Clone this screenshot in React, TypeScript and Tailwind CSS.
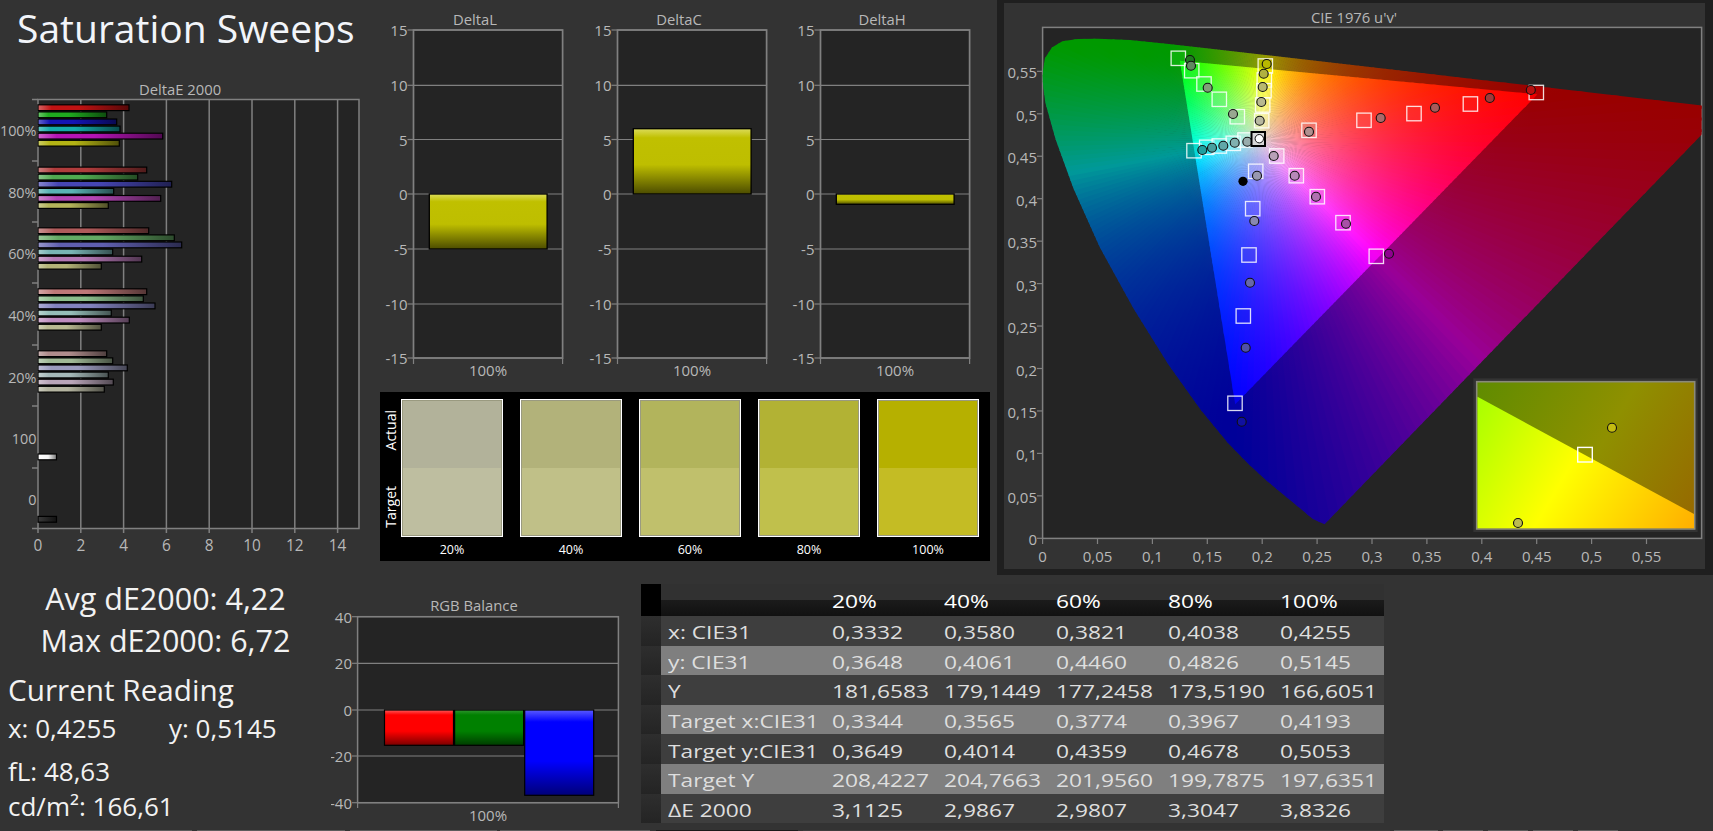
import React from "react";

type Bar = { end: number; c: string };

const AXIS = "#b8b8b8";
const GRID = "#808080";
const PLOT = "#242424";

// ---- colour helpers ----
const hex = (c: string) => [1, 3, 5].map((i) => parseInt(c.slice(i, i + 2), 16));
const mix = (c: string, to: number, t: number) =>
  `rgb(${hex(c)
    .map((v) => Math.round(v + (to - v) * t))
    .join(",")})`;

// ---- DeltaE 2000 ----
const groups: { label: string; top: number; ends: number[]; colors: string[] }[] = [
  { label: "100%", top: 107.7, ends: [129, 106.7, 116.7, 120, 162.7, 119.3], colors: ["#c01212", "#1faa1f", "#1414b4", "#14aaaa", "#b414b4", "#b4b414"] },
  { label: "80%", top: 170, ends: [146.7, 137.7, 171.7, 113.7, 160.7, 108.3], colors: ["#b03c3c", "#50aa50", "#4646b4", "#5ab4b4", "#b446b4", "#b4b45a"] },
  { label: "60%", top: 230.7, ends: [148.7, 174.3, 181.7, 112.7, 141.7, 101.3], colors: ["#af5a5a", "#64aa64", "#5f5faf", "#78b4b4", "#b478b4", "#b4b478"] },
  { label: "40%", top: 291.7, ends: [146.7, 143.3, 155, 111.3, 129.3, 101.3], colors: ["#be7878", "#8cbe8c", "#8282be", "#96beb9", "#be8cbe", "#b9b991"] },
  { label: "20%", top: 353.7, ends: [106.7, 112.7, 127.3, 108.3, 113.3, 104.3], colors: ["#af8c8c", "#a0b996", "#9b9bbe", "#a5b9b9", "#b9a5b9", "#b4b4a0"] },
];

const deltaEBars: (Bar & { y: number; id: string })[] = [];
groups.forEach((g, gi) =>
  g.ends.forEach((end, i) =>
    deltaEBars.push({ end, c: g.colors[i], y: g.top + i * 7.1, id: `de-${gi}-${i}` })
  )
);

const DeltaEChart = () => {
  const yTicks = [99.5, 161, 222, 283, 345, 406, 468, 528.5];
  const xVal = (v: number) => 38 + v * 21.4;
  return (
    <svg width={380} height={490} viewBox="0 70 380 490" className="block">
      <defs>
        {deltaEBars.map((b) => (
          <linearGradient key={b.id} id={b.id}>
            <stop offset="0" stopColor={mix(b.c, 255, 0.35)} />
            <stop offset="0.15" stopColor={b.c} />
            <stop offset="0.45" stopColor={b.c} />
            <stop offset="1" stopColor={mix(b.c, 0, 0.55)} />
          </linearGradient>
        ))}
        <linearGradient id="de-white">
          <stop offset="0" stopColor="#ffffff" />
          <stop offset="0.55" stopColor="#f4f4f4" />
          <stop offset="1" stopColor="#777777" />
        </linearGradient>
        <linearGradient id="de-black">
          <stop offset="0" stopColor="#3a3a3a" />
          <stop offset="1" stopColor="#111111" />
        </linearGradient>
      </defs>
      <text x={180} y={88.5} textAnchor="middle" dominantBaseline="central" fontSize={14.8} fill={AXIS}>
        DeltaE 2000
      </text>
      <rect x={38} y={99.5} width={321} height={429} fill={PLOT} stroke={GRID} strokeWidth={1.5} />
      {[2, 4, 6, 8, 10, 12, 14].map((v) => (
        <line key={v} x1={xVal(v)} x2={xVal(v)} y1={99.5} y2={528.5} stroke={GRID} strokeWidth={1.5} />
      ))}
      {yTicks.map((y) => (
        <line key={y} x1={32} x2={38} y1={y} y2={y} stroke={GRID} strokeWidth={1.5} />
      ))}
      {[0, 2, 4, 6, 8, 10, 12, 14].map((v) => (
        <g key={v}>
          <line x1={xVal(v)} x2={xVal(v)} y1={528.5} y2={533} stroke={GRID} strokeWidth={1.5} />
          <text x={xVal(v)} y={545.5} textAnchor="middle" dominantBaseline="central" fontSize={15.4} fill={AXIS}>
            {v}
          </text>
        </g>
      ))}
      {[
        ["100%", 130.5],
        ["80%", 192],
        ["60%", 253],
        ["40%", 315],
        ["20%", 377],
        ["100", 438],
        ["0", 499],
      ].map(([t, y]) => (
        <text key={t} x={36.5} y={y} textAnchor="end" dominantBaseline="central" fontSize={14.4} fill={AXIS}>
          {t}
        </text>
      ))}
      {deltaEBars.map((b) => (
        <rect key={b.id} x={38} y={b.y - 2.9} width={b.end - 38} height={5.8} fill={`url(#${b.id})`} stroke="#000" strokeWidth={1.2} />
      ))}
      <rect x={38} y={454} width={18.5} height={5.8} fill="url(#de-white)" stroke="#000" strokeWidth={1.2} />
      <rect x={38} y={516.4} width={18.5} height={5.8} fill="url(#de-black)" stroke="#000" strokeWidth={1.2} />
    </svg>
  );
};

// ---- DeltaL / C / H ----
const DeltaChart = ({ title, id, y0, y1 }: { title: string; id: string; y0: number; y1: number }) => {
  const left = 33.5;
  const right = 182.6;
  const ticks: [number, number][] = [
    [15, 30],
    [10, 85.3],
    [5, 139.5],
    [0, 194],
    [-5, 249],
    [-10, 304],
    [-15, 358],
  ];
  return (
    <svg width={203.5} height={380} viewBox="0 0 203.5 380" className="block">
      <defs>
        <linearGradient id={id} x1="0" y1="0" x2="0" y2="1">
          <stop offset="0" stopColor="#dcdc5a" />
          <stop offset="0.14" stopColor="#c0c000" />
          <stop offset="0.55" stopColor="#bebe00" />
          <stop offset="1" stopColor="#4c4c00" />
        </linearGradient>
      </defs>
      <text x={95} y={19} textAnchor="middle" dominantBaseline="central" fontSize={14.8} fill={AXIS}>
        {title}
      </text>
      <rect x={left} y={30} width={right - left} height={328} fill={PLOT} stroke={GRID} strokeWidth={1.7} />
      {ticks.map(([v, y]) => (
        <g key={v}>
          <line x1={left} x2={right} y1={y} y2={y} stroke={GRID} strokeWidth={1.2} />
          <line x1={left - 6} x2={left} y1={y} y2={y} stroke={GRID} strokeWidth={1.2} />
          <text x={left - 6} y={y} textAnchor="end" dominantBaseline="central" fontSize={15} fill={AXIS}>
            {v}
          </text>
        </g>
      ))}
      <line x1={left} x2={left} y1={358} y2={364} stroke={GRID} strokeWidth={1.2} />
      <line x1={right} x2={right} y1={358} y2={364} stroke={GRID} strokeWidth={1.2} />
      <rect x={49.3} y={y0} width={117.8} height={y1 - y0} fill={`url(#${id})`} stroke="#000" strokeWidth={1.3} />
      <text x={108} y={370} textAnchor="middle" dominantBaseline="central" fontSize={15} fill={AXIS}>
        100%
      </text>
    </svg>
  );
};

// ---- swatches ----
const swatches = [
  { label: "20%", actual: "#b2b29a", target: "#bebea0" },
  { label: "40%", actual: "#b2b27a", target: "#c0c088" },
  { label: "60%", actual: "#b2b45c", target: "#c0c06c" },
  { label: "80%", actual: "#b2b234", target: "#c0c04c" },
  { label: "100%", actual: "#b6b000", target: "#c4bc24" },
];

// ---- CIE 1976 ----
const px = (u: number) => 1042.6 + 1098 * u;
const py = (v: number) => 538.3 - 849 * v;

const locus: [number, number][] = [
  [0.2568, 0.0166], [0.2461, 0.0226], [0.2347, 0.035], [0.2161, 0.0549], [0.2033, 0.0688], [0.1877, 0.0871],
  [0.169, 0.1119], [0.1441, 0.151], [0.1147, 0.2044], [0.0828, 0.2708], [0.0521, 0.3427], [0.0282, 0.4117],
  [0.0119, 0.4698], [0.0025, 0.5131], [-0.0005, 0.5431], [0.002, 0.565], [0.0085, 0.578], [0.018, 0.5855],
  [0.032, 0.5882], [0.0501, 0.5885], [0.0792, 0.5868], [0.1127, 0.5825], [0.1531, 0.5766], [0.2026, 0.5694], [0.2623, 0.5604],
  [0.3315, 0.5501], [0.4035, 0.5393], [0.5203, 0.5219], [0.6005, 0.5099], [0.6234, 0.5065],
];
const locusPts = locus.map(([u, v]) => `${px(u)},${py(v)}`).join(" ");
const gamutPts = [
  [0.4507, 0.5229],
  [0.125, 0.5625],
  [0.1754, 0.1579],
]
  .map(([u, v]) => `${px(u)},${py(v)}`)
  .join(" ");

// colour of a chromaticity point, plain linear rec709 scaled to its largest channel
const colorAt = (sx: number, sy: number, k: number) => {
  const u = (sx - 1042.6) / 1098;
  const v = Math.max((538.3 - sy) / 849, 0.01);
  const den = 6 * u - 16 * v + 12;
  const x = (9 * u) / den;
  const y = (4 * v) / den;
  const X = x / y;
  const Z = (1 - x - y) / y;
  const rgb = [
    3.2406 * X - 1.5372 - 0.4986 * Z,
    -0.9689 * X + 1.8758 + 0.0415 * Z,
    0.0557 * X - 0.204 + 1.057 * Z,
  ].map((c) => Math.max(c, 0));
  const m = Math.max(...rgb);
  return `rgb(${rgb.map((c) => Math.round((c / m) * 255 * k)).join(",")})`;
};

const WX = px(0.1978);
const WY = py(0.4683);
const WEDGES = 240;

const makeFan = (prefix: string, radius: number, k: number) =>
  Array.from({ length: WEDGES }, (_, i) => {
    const step = (Math.PI * 2) / WEDGES;
    const a0 = i * step;
    const a1 = a0 + step * 1.25;
    const mid = a0 + step / 2;
    const stops = Array.from({ length: 19 }, (_, j) => {
      const t = Math.pow(j / 18, 1.6);
      return {
        t,
        c: colorAt(WX + Math.cos(mid) * radius * t, WY + Math.sin(mid) * radius * t, k),
      };
    });
    return {
      id: `${prefix}${i}`,
      x2: WX + Math.cos(mid) * radius,
      y2: WY + Math.sin(mid) * radius,
      pts: `${WX},${WY} ${WX + Math.cos(a0) * radius * 1.05},${WY + Math.sin(a0) * radius * 1.05} ${WX + Math.cos(a1) * radius * 1.05},${WY + Math.sin(a1) * radius * 1.05}`,
      stops,
    };
  });

const outerFan = makeFan("o", 520, 0.6);
const innerFan = makeFan("i", 300, 1);

const Fan = ({ fan, clip }: { fan: ReturnType<typeof makeFan>; clip: string }) => (
  <g clipPath={`url(#${clip})`}>
    <defs>
      {fan.map((w) => (
        <linearGradient key={w.id} id={w.id} gradientUnits="userSpaceOnUse" x1={WX} y1={WY} x2={w.x2} y2={w.y2}>
          {w.stops.map((s, j) => (
            <stop key={j} offset={s.t} stopColor={s.c} />
          ))}
        </linearGradient>
      ))}
    </defs>
    {fan.map((w) => (
      <polygon key={w.id} points={w.pts} fill={`url(#${w.id})`} />
    ))}
  </g>
);

const squares: [number, number, string][] = [
  [1178.3, 58.3, "#1fd01f"], [1191.7, 70.7, "#30e840"], [1204, 84, "#48f060"], [1219.3, 99.3, "#70f088"], [1237.3, 116.7, "#a8f4b0"],
  [1194, 150.7, "#10a8a0"], [1206.7, 147.3, "#40e0f0"], [1219.3, 146, "#70e8f4"], [1233.3, 143.3, "#a0f0f8"], [1245, 140, "#d0f8fc"],
  [1265.3, 66, "#e8e800"], [1264.3, 80, "#f0f040"], [1264, 90.7, "#f4f470"], [1262.7, 105, "#f8f890"], [1261.7, 120.7, "#fcfcc0"],
  [1309, 130.3, "#d87878"], [1364, 120.3, "#ff5050"], [1414, 113.6, "#ff3838"], [1470.4, 104, "#ff2020"], [1536.3, 92.5, "#d80000"],
  [1276.7, 156, "#f8d0f8"], [1296.3, 175.7, "#f0a0f0"], [1317.3, 196.7, "#ec78ec"], [1343, 222.7, "#e040e0"], [1376.3, 256.3, "#e000e0"],
  [1255.7, 171.3, "#a8a8ff"], [1252.7, 208.7, "#6868ff"], [1249, 255, "#4848f0"], [1243.3, 316, "#2020f0"], [1235, 403.3, "#0808c0"],
];

const dots: [number, number, string][] = [
  [1190, 60, "#1f7a1f"], [1191, 65.7, "#608860"], [1207.7, 87.7, "#80a078"], [1233, 114, "#98a890"],
  [1202.3, 150, "#20a0a0"], [1212, 147.7, "#48a0a0"], [1223.3, 145.7, "#60a8a8"], [1234.7, 142.7, "#80b0b0"], [1247.3, 141.7, "#98acac"],
  [1266.7, 64, "#b8b800"], [1263.7, 73.7, "#b0b040"], [1262.7, 87, "#b8b870"], [1261.3, 102, "#b8b890"], [1259.7, 120.7, "#b8b8a0"],
  [1309, 131.7, "#b09090"], [1380.7, 118, "#aa6a6a"], [1435, 107.7, "#a85a5a"], [1489.8, 98, "#a03a3a"], [1530.8, 90, "#b81010"],
  [1273.7, 156, "#b8a0b8"], [1294.7, 175.7, "#b888b8"], [1316, 196.7, "#b070b0"], [1346, 223.7, "#a850a8"], [1389, 253.7, "#900090"],
  [1257, 175.7, "#9898b0"], [1254.3, 221, "#8888b0"], [1250, 282.7, "#6868a8"], [1245.7, 347.7, "#5050a8"], [1241.7, 421.7, "#1010a0"],
];

const xLabels = ["0", "0,05", "0,1", "0,15", "0,2", "0,25", "0,3", "0,35", "0,4", "0,45", "0,5", "0,55"];
const yLabels = ["0", "0,05", "0,1", "0,15", "0,2", "0,25", "0,3", "0,35", "0,4", "0,45", "0,5", "0,55"];

const CieChart = () => (
  <svg width={701} height={566} viewBox="1004 3 701 566" className="block">
    <defs>
      <clipPath id="locus">
        <polygon points={locusPts} />
      </clipPath>
      <clipPath id="gamut">
        <polygon points={gamutPts} />
      </clipPath>
      <clipPath id="plot">
        <rect x={1042.6} y={27.4} width={659} height={511} />
      </clipPath>
      <linearGradient id="inset-dark" gradientUnits="userSpaceOnUse" x1={1477} y1={382} x2={1695} y2={510}>
        <stop offset="0" stopColor="#5f8c00" />
        <stop offset="0.55" stopColor="#8f9000" />
        <stop offset="1" stopColor="#966a00" />
      </linearGradient>
      <linearGradient id="inset-lit" gradientUnits="userSpaceOnUse" x1={1477} y1={400} x2={1695} y2={529}>
        <stop offset="0" stopColor="#a8ff00" />
        <stop offset="0.45" stopColor="#ffff00" />
        <stop offset="1" stopColor="#ffae00" />
      </linearGradient>
    </defs>
    <text x={1354} y={16.6} textAnchor="middle" dominantBaseline="central" fontSize={14.8} fill={AXIS}>
      CIE 1976 u'v'
    </text>
    <rect x={1042.6} y={27.4} width={659} height={511} fill={PLOT} stroke={GRID} strokeWidth={1.5} />
    <g clipPath="url(#plot)">
      <Fan fan={outerFan} clip="locus" />
      <Fan fan={innerFan} clip="gamut" />
    </g>
    {xLabels.map((t, i) => (
      <g key={t}>
        <line x1={px(i * 0.05)} x2={px(i * 0.05)} y1={538.3} y2={544} stroke={GRID} strokeWidth={1.2} />
        <text x={px(i * 0.05)} y={556} textAnchor="middle" dominantBaseline="central" fontSize={15} fill={AXIS}>
          {t}
        </text>
      </g>
    ))}
    {yLabels.map((t, i) => (
      <g key={t}>
        <line x1={1037} x2={1042.6} y1={py(i * 0.05)} y2={py(i * 0.05)} stroke={GRID} strokeWidth={1.2} />
        <text x={1037} y={py(i * 0.05) + 1} textAnchor="end" dominantBaseline="central" fontSize={15} fill={AXIS}>
          {t}
        </text>
      </g>
    ))}
    {squares.map(([x, y, c]) => (
      <rect key={`${x}-${y}`} x={x - 7.2} y={y - 7.2} width={14.4} height={14.4} fill={c} fillOpacity={0.4} stroke="#fff" strokeOpacity={0.85} strokeWidth={1.3} />
    ))}
    {dots.map(([x, y, c]) => (
      <circle key={`${x}-${y}`} cx={x} cy={y} r={4.5} fill={c} stroke="#111" strokeWidth={1.1} />
    ))}
    <rect x={1251.5} y={132} width={13.5} height={14} fill="#d8d8d8" stroke="#000" strokeWidth={2} />
    <circle cx={1259.3} cy={138.7} r={4.2} fill="#fff" stroke="#111" strokeWidth={1} />
    <circle cx={1243} cy={181.3} r={4.6} fill="#000" />
    {/* zoomed inset around the current point */}
    <rect x={1473.3} y={378.3} width={224.4} height={153.7} fill="#333" />
    <rect x={1476.7} y={381.7} width={218} height={147.3} fill="url(#inset-dark)" stroke="#8a8a7a" strokeWidth={1.6} />
    <polygon points="1477.5,396.7 1694,514 1694,528.2 1477.5,528.2" fill="url(#inset-lit)" />
    <rect x={1577.7} y={447.4} width={14.6} height={14.6} fill="none" stroke="#fff" strokeWidth={1.4} />
    <circle cx={1612} cy={427.7} r={4.5} fill="#c4bc10" stroke="#111" strokeWidth={1.1} />
    <circle cx={1518} cy={523} r={4.5} fill="#bcbc50" stroke="#111" strokeWidth={1.1} />
  </svg>
);

// ---- RGB balance ----
const RgbChart = () => {
  const bars = [
    { x: 384.5, y1: 745.3, id: "rgb-r", top: "#ff5a5a", mid: "#ff0000", low: "#7a0000" },
    { x: 454.6, y1: 745.3, id: "rgb-g", top: "#2f962f", mid: "#008000", low: "#003c00" },
    { x: 524.7, y1: 795.3, id: "rgb-b", top: "#5a5aff", mid: "#0000ff", low: "#000078" },
  ];
  return (
    <svg width={300} height={255} viewBox="331 575 300 255" className="block">
      <defs>
        {bars.map((b) => (
          <linearGradient key={b.id} id={b.id} x1="0" y1="0" x2="0" y2="1">
            <stop offset="0" stopColor={b.top} />
            <stop offset="0.14" stopColor={b.mid} />
            <stop offset="0.6" stopColor={b.mid} />
            <stop offset="1" stopColor={b.low} />
          </linearGradient>
        ))}
      </defs>
      <text x={474} y={605} textAnchor="middle" dominantBaseline="central" fontSize={14.8} fill={AXIS}>
        RGB Balance
      </text>
      <rect x={357.6} y={616.7} width={260.8} height={186} fill={PLOT} stroke={GRID} strokeWidth={1.5} />
      {[
        [40, 616.7],
        [20, 663.3],
        [0, 710],
        [-20, 756],
        [-40, 802.7],
      ].map(([v, y]) => (
        <g key={v}>
          <line x1={357.6} x2={618.4} y1={y} y2={y} stroke={GRID} strokeWidth={1.2} />
          <line x1={352} x2={357.6} y1={y} y2={y} stroke={GRID} strokeWidth={1.2} />
          <text x={352} y={y} textAnchor="end" dominantBaseline="central" fontSize={15} fill={AXIS}>
            {v}
          </text>
        </g>
      ))}
      <line x1={357.6} x2={357.6} y1={802.7} y2={808} stroke={GRID} strokeWidth={1.2} />
      <line x1={618.4} x2={618.4} y1={802.7} y2={808} stroke={GRID} strokeWidth={1.2} />
      {bars.map((b) => (
        <rect key={b.id} x={b.x} y={710} width={69} height={b.y1 - 710} fill={`url(#${b.id})`} stroke="#000" strokeWidth={1.2} />
      ))}
      <text x={488} y={815} textAnchor="middle" dominantBaseline="central" fontSize={15} fill={AXIS}>
        100%
      </text>
    </svg>
  );
};

// ---- table ----
const rows = [
  ["x: CIE31", "0,3332", "0,3580", "0,3821", "0,4038", "0,4255"],
  ["y: CIE31", "0,3648", "0,4061", "0,4460", "0,4826", "0,5145"],
  ["Y", "181,6583", "179,1449", "177,2458", "173,5190", "166,6051"],
  ["Target x:CIE31", "0,3344", "0,3565", "0,3774", "0,3967", "0,4193"],
  ["Target y:CIE31", "0,3649", "0,4014", "0,4359", "0,4678", "0,5053"],
  ["Target Y", "208,4227", "204,7663", "201,9560", "199,7875", "197,6351"],
  ["ΔE 2000", "3,1125", "2,9867", "2,9807", "3,3047", "3,8326"],
];

const Cell = ({ children, className }: { children: React.ReactNode; className: string }) => (
  <div className={`flex items-center pt-[3px] ${className}`}>
    <span className="inline-block origin-left scale-x-[1.3] whitespace-nowrap">{children}</span>
  </div>
);

const DataTable = () => (
  <div className="mt-[9px] ml-[10px] w-[743px] text-[17.5px] text-[#dedede]">
    <div className="flex h-[32px]">
      <div className="w-[20px] bg-black" />
      <div className="flex w-[723px] bg-[linear-gradient(#313131_0%,#313131_50%,#1b1b1b_50%,#111111_100%)] font-medium text-white">
        <div className="w-[171px]" />
        {["20%", "40%", "60%", "80%", "100%"].map((h, i) => (
          <Cell key={h} className={i === 4 ? "w-[104px]" : "w-[112px]"}>
            {h}
          </Cell>
        ))}
      </div>
    </div>
    {rows.map((r, i) => (
      <div key={r[0]} className="flex h-[29.6px]">
        <div className="w-[20px] bg-[linear-gradient(#2e2e2e,#242424)]" />
        <div className={`flex w-[723px] ${i % 2 === 0 ? "bg-[#3e3e3e]" : "bg-[#7f7f7f]"}`}>
          <Cell className="w-[171px] pl-[7px]">{r[0]}</Cell>
          {r.slice(1).map((v, j) => (
            <Cell key={j} className={j === 4 ? "w-[104px]" : "w-[112px]"}>
              {v}
            </Cell>
          ))}
        </div>
      </div>
    ))}
  </div>
);

const tabs = [
  [50, 142, "#5c5c5c"], [5, 148, "#5c5c5c"], [5, 147, "#5c5c5c"], [3, 150, "#5c5c5c"], [6, 142, "#1a1a1a"], [5, 587, "#3c3c3c"],
  [4, 44, "#5c5c5c"], [5, 40, "#5c5c5c"], [5, 40, "#5c5c5c"], [5, 40, "#5c5c5c"], [5, 40, "#5c5c5c"],
] as const;

export default function App() {
  return (
    <div className="flex h-[831px] w-[1713px] flex-col overflow-hidden bg-[#333333] font-['Open_Sans',sans-serif]">
      <div className="flex h-[575px]">
        <div className="w-[380px]">
          <h1 className="h-[70px] pl-[17px] text-[39px] leading-[56px] font-normal text-[#f2f5fa]">Saturation Sweeps</h1>
          <DeltaEChart />
        </div>

        <div className="w-[617px]">
          <div className="flex h-[392px]">
            <DeltaChart title="DeltaL" id="delta-l" y0={194} y1={249} />
            <DeltaChart title="DeltaC" id="delta-c" y0={128.7} y1={194} />
            <DeltaChart title="DeltaH" id="delta-h" y0={194} y1={204.3} />
          </div>
          <div className="flex h-[169px] w-[610px] bg-black pt-[7px]">
            <div className="flex h-[153px] w-[21px] flex-col text-[14px] text-white">
              <div className="flex h-[62px] items-center justify-center">
                <span className="rotate-180 [writing-mode:vertical-rl]">Actual</span>
              </div>
              <div className="flex h-[91px] items-center justify-center">
                <span className="rotate-180 [writing-mode:vertical-rl]">Target</span>
              </div>
            </div>
            <div className="flex gap-[17px]">
              {swatches.map((s) => (
                <div key={s.label} className="w-[102px]">
                  <div className="h-[138px] border border-white">
                    <div className="h-[136px] border border-[#9a9a80]">
                      <div className="h-[67px]" style={{ background: s.actual }} />
                      <div className="h-[67px]" style={{ background: s.target }} />
                    </div>
                  </div>
                  <div className="mt-[4px] text-center text-[12.5px] text-white">{s.label}</div>
                </div>
              ))}
            </div>
          </div>
        </div>

        <div className="h-[575px] w-[716px] bg-[#1f1f1f] pt-[3px] pl-[7px]">
          <div className="h-[566px] w-[701px] bg-[#333333]">
            <CieChart />
          </div>
        </div>
      </div>

      <div className="flex h-[255px]">
        <div className="w-[331px] text-[#f2f2f2]">
          <div className="mt-[2px] text-center text-[30.5px] leading-[42px]">Avg dE2000: 4,22</div>
          <div className="text-center text-[30.5px] leading-[42px]">Max dE2000: 6,72</div>
          <div className="mt-[10px] pl-[8px] text-[29.7px] leading-[38px]">Current Reading</div>
          <div className="flex pl-[8px] text-[26px] leading-[38px]">
            <span className="w-[161px]">x: 0,4255</span>
            <span>y: 0,5145</span>
          </div>
          <div className="mt-[7px] pl-[8px] text-[26px] leading-[35px]">fL: 48,63</div>
          <div className="pl-[8px] text-[26px] leading-[35px]">cd/m²: 166,61</div>
        </div>
        <RgbChart />
        <DataTable />
      </div>

      <div className="flex h-[1px]">
        {tabs.map(([gap, w, c], i) => (
          <div key={i} className="h-[1px]" style={{ marginLeft: gap, width: w, background: c }} />
        ))}
      </div>
    </div>
  );
}
